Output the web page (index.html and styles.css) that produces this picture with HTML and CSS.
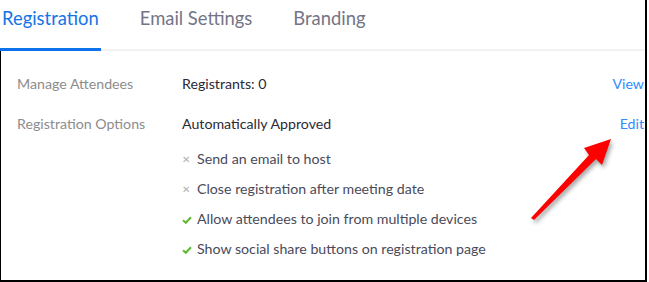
FILE: index.html
```html
<!DOCTYPE html>
<html lang="en">
<head>
    <meta charset="UTF-8">
    <meta name="viewport" content="width=device-width, initial-scale=1.0">
    <title>Registration</title>
    <link rel="stylesheet" href="styles.css">
</head>
<body>
    <div class="frame">
        <div class="tabs">
            <a class="tab active">Registration</a>
            <a class="tab">Email Settings</a>
            <a class="tab">Branding</a>
        </div>

        <div class="content">
            <div class="row">
                <div class="label">Manage Attendees</div>
                <div class="value">Registrants: 0</div>
                <a class="action">View</a>
            </div>
            <div class="row">
                <div class="label">Registration Options</div>
                <div class="value">Automatically Approved</div>
                <a class="action">Edit</a>
            </div>
            <ul class="options">
                <li><span class="mark off">&#x2715;</span>Send an email to host</li>
                <li><span class="mark off">&#x2715;</span>Close registration after meeting date</li>
                <li><span class="mark on"><svg width="10" height="8" viewBox="0 0 10 8"><path d="M1 4.2 L3.8 6.8 L9 1.2" fill="none" stroke="#5cb82e" stroke-width="2"/></svg></span>Allow attendees to join from multiple devices</li>
                <li><span class="mark on"><svg width="10" height="8" viewBox="0 0 10 8"><path d="M1 4.2 L3.8 6.8 L9 1.2" fill="none" stroke="#5cb82e" stroke-width="2"/></svg></span>Show social share buttons on registration page</li>
            </ul>
        </div>

        <svg class="arrow" width="100" height="100" viewBox="525 130 100 100">
            <polygon points="531,218 589,155 584,148 611,139 602,165 596,159 534,220" fill="#ff0000"/>
        </svg>
    </div>
</body>
</html>
```

FILE: styles.css
```css
body {
    margin: 0;
    font-family: Lato, "Open Sans", sans-serif;
    background: #fff;
}
.frame {
    position: relative;
    width: 647px;
    height: 282px;
    box-sizing: border-box;
    border-right: 2px solid #000;
    border-bottom: 2px solid #000;
}
.tabs {
    display: flex;
    height: 49px;
    border-bottom: 2px solid #f2f2f2;
    margin-right: 1px;
}
.tab {
    font-size: 18.4px;
    color: #747487;
    padding: 7px 2px 0;
    margin-right: 37px;
    text-decoration: none;
}
.tab.active {
    color: #1473e6;
    border-bottom: 3px solid #0e72ed;
    margin-bottom: -2px;
}
.content {
    border-left: 1px solid #000;
    height: 229px;
    box-sizing: border-box;
    padding: 24px 1px 0 16px;
}
.row {
    display: flex;
    font-size: 14.2px;
    height: 40px;
}
.label {
    width: 165px;
    color: #8c8c8c;
}
.value {
    flex: 1;
    color: #2a2a36;
}
.action {
    color: #2d8cff;
}
.options {
    list-style: none;
    margin: -5px 0 0;
    padding: 0 0 0 165px;
    font-size: 14.2px;
    color: #4a4a5a;
}
.options li {
    height: 30px;
    display: flex;
    align-items: flex-start;
}
.mark {
    width: 15px;
    display: inline-block;
}
.mark.off {
    color: #b0b0b0;
    font-size: 10px;
    padding-top: 3px;
}
.mark.on svg {
    margin-top: 6px;
}
.arrow {
    position: absolute;
    left: 525px;
    top: 130px;
    filter: drop-shadow(2px 3px 2px rgba(0,0,0,0.35));
}
```
